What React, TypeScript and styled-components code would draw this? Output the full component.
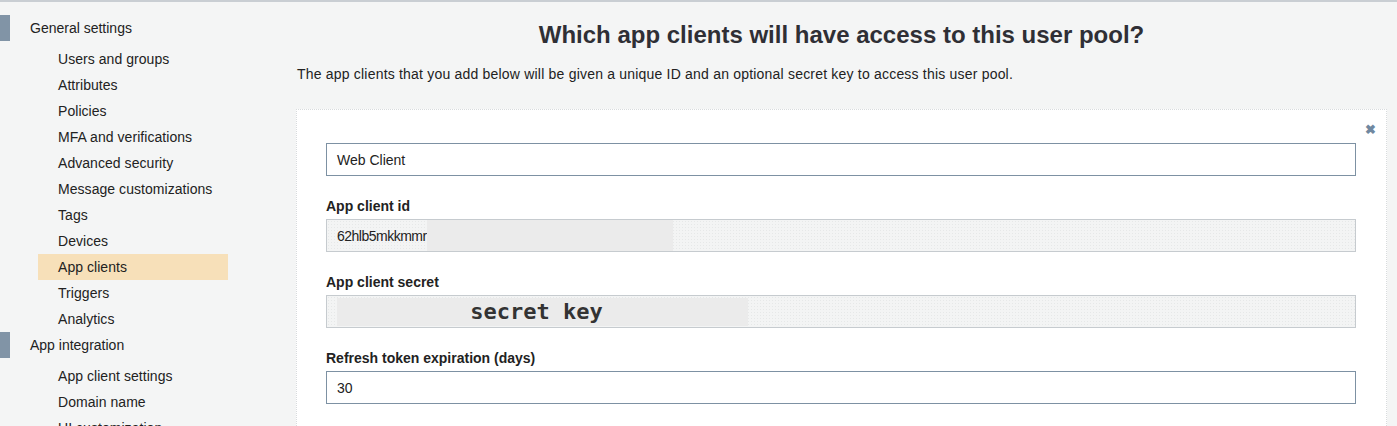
import React from 'react';
import styled, { createGlobalStyle } from 'styled-components';

const GlobalStyle = createGlobalStyle`
  html, body {
    margin: 0;
    padding: 0;
    background: #f4f5f5;
    font-family: "Liberation Sans", Arial, sans-serif;
    color: #333;
  }
`

const Page = styled.div`
  display: grid;
  grid-template-columns: 280px 1fr;
  border-top: 2px solid #c9ced3;
  height: 424px;
  overflow: hidden;
`

const Sidebar = styled.nav`
  padding-top: 13px;
`

const Group = styled.div`
  display: flex;
  align-items: center;
  height: 26px;
  margin-bottom: 5px;
  font-size: 14px;
  color: #222;
  &::before{
    content: '';
    width: 10px;
    height: 26px;
    background: #8194a6;
    margin-right: 20px;
  }
`

const Item = styled.div<{ active?: boolean }>`
  height: 26px;
  line-height: 26px;
  width: 190px;
  margin-left: 38px;
  padding-left: 20px;
  box-sizing: border-box;
  font-size: 14px;
  letter-spacing: 0.05px;
  color: #222;
  background: ${p => p.active ? '#f7e0b9' : 'transparent'};
`

const Main = styled.main`
  padding: 0 10px 0 16px;
`

const Heading = styled.h1`
  margin: 0;
  padding-top: 18px;
  height: 30px;
  line-height: 30px;
  text-align: center;
  font-size: 24px;
  font-weight: bold;
  color: #2f2f35;
`

const Intro = styled.p`
  margin: 16px 0 0 1px;
  font-size: 14px;
  letter-spacing: 0.2px;
  line-height: 16px;
  color: #222;
`

const Panel = styled.section`
  position: relative;
  margin-top: 27px;
  background: #fff;
  border: 1px dotted #d8dbdd;
  border-bottom: none;
  padding: 33px 30px 40px 29px;
`

const Close = styled.span`
  position: absolute;
  top: 12px;
  right: 10px;
  font-size: 13px;
  font-weight: bold;
  color: #7088a0;
`

const Label = styled.div`
  margin: 21px 0 4px;
  height: 18px;
  line-height: 18px;
  font-size: 14px;
  font-weight: bold;
  color: #222;
`

const Field = styled.div<{ readOnly?: boolean }>`
  display: flex;
  align-items: center;
  height: 33px;
  box-sizing: border-box;
  padding-left: 10px;
  font-size: 14px;
  color: #222;
  border: 1px solid ${p => p.readOnly ? '#c6cbcf' : '#7d91a3'};
  background-color: ${p => p.readOnly ? '#f3f4f4' : '#fff'};
  background-image: ${p => p.readOnly ? 'radial-gradient(#e6e8e8 0.6px, transparent 0.8px)' : 'none'};
  background-size: 3px 3px;
`

const IdText = styled.span`
  letter-spacing: -0.5px;
`

const Redact = styled.span<{ w: number; h: number }>`
  display: inline-flex;
  align-items: center;
  justify-content: center;
  box-sizing: border-box;
  padding-right: 12px;
  width: ${p => p.w}px;
  height: ${p => p.h}px;
  background: #ebebeb;
  font-family: "DejaVu Sans Mono", "Liberation Mono", monospace;
  font-weight: bold;
  font-size: 22px;
  color: #333;
`

const navGeneral = ['Users and groups', 'Attributes', 'Policies', 'MFA and verifications', 'Advanced security',
  'Message customizations', 'Tags', 'Devices', 'App clients', 'Triggers', 'Analytics']
const navIntegration = ['App client settings', 'Domain name', 'UI customization']

export default function App() {
  return (
    <>
      <GlobalStyle/>
      <Page>
        <Sidebar>
          <Group>General settings</Group>
          {navGeneral.map(n => <Item key={n} active={n === 'App clients'}>{n}</Item>)}
          <Group>App integration</Group>
          {navIntegration.map(n => <Item key={n}>{n}</Item>)}
        </Sidebar>
        <Main>
          <Heading>Which app clients will have access to this user pool?</Heading>
          <Intro>The app clients that you add below will be given a unique ID and an optional secret key to access this user pool.</Intro>
          <Panel>
            <Close>✖</Close>
            <Field>Web Client</Field>
            <Label>App client id</Label>
            <Field readOnly><IdText>62hlb5mkkmmr</IdText><Redact w={246} h={31}/></Field>
            <Label>App client secret</Label>
            <Field readOnly><Redact w={411} h={28}>secret key</Redact></Field>
            <Label>Refresh token expiration (days)</Label>
            <Field>30</Field>
          </Panel>
        </Main>
      </Page>
    </>
  )
}
